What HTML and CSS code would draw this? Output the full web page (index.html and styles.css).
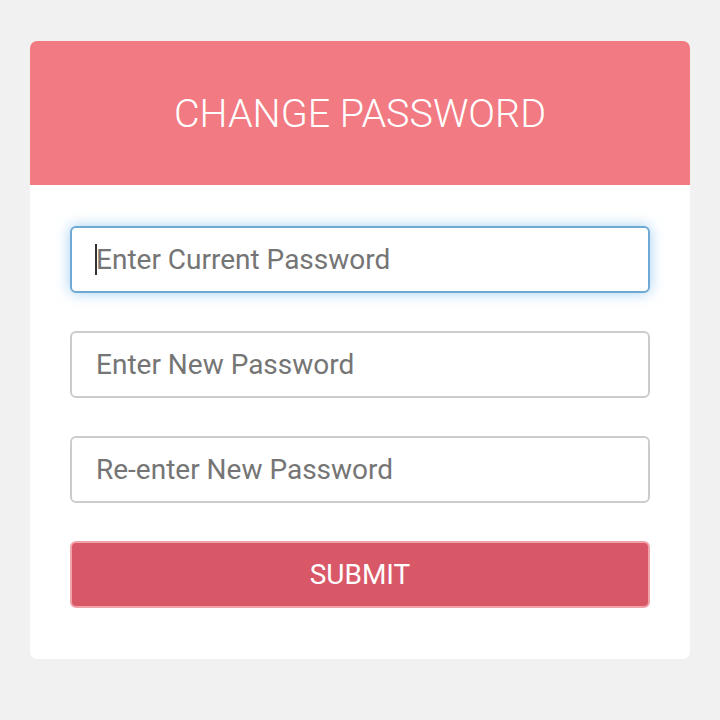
FILE: index.html
```html
<!DOCTYPE html>
<html lang="en">

<head>
    <meta charset="UTF-8">
    <meta name="viewport" content="width=device-width, initial-scale=1.0">
    <title>Change Password</title>
    <link rel="stylesheet" href="styles.css">
</head>

<body>
    <div class="card">
        <div class="card-header">
            <h1>CHANGE PASSWORD</h1>
        </div>
        <form class="card-body" onsubmit="return false;">
            <div class="field focused">
                <input type="password" class="input" placeholder="Enter Current Password">
                <span class="caret"></span>
            </div>
            <div class="field">
                <input type="password" class="input" placeholder="Enter New Password">
            </div>
            <div class="field">
                <input type="password" class="input" placeholder="Re-enter New Password">
            </div>
            <button type="submit" class="button">SUBMIT</button>
        </form>
    </div>
</body>

</html>
```

FILE: styles.css
```css
body {
    font-family: 'Roboto', 'Liberation Sans', sans-serif;
    background: #f1f1f1;
    margin: 0;
    padding: 41px 30px 0;
}

.card {
    background: #ffffff;
    border-radius: 7px;
    overflow: hidden;
    width: 660px;
}

.card-header {
    background: #f27a82;
    height: 144px;
    display: flex;
    align-items: center;
    justify-content: center;
}

.card-header h1 {
    margin: 0;
    color: #ffffff;
    font-weight: 300;
    font-size: 39.5px;
}

.card-body {
    padding: 41px 40px 51px;
    display: flex;
    flex-direction: column;
    gap: 38px;
}

.field {
    position: relative;
}

.input {
    box-sizing: border-box;
    width: 100%;
    height: 67px;
    padding: 0 24px;
    border: 2px solid #cccccc;
    border-radius: 6px;
    font-family: inherit;
    font-size: 28px;
    color: #333333;
    background: #ffffff;
    outline: none;
}

.input::placeholder {
    color: #757575;
}

.focused .input {
    border-color: #6fa8d2;
    box-shadow: 0 0 14px rgba(102, 175, 233, 0.6);
}

.caret {
    position: absolute;
    left: 25px;
    top: 18px;
    width: 2px;
    height: 31px;
    background: #333333;
}

.button {
    height: 67px;
    background: #d95868;
    color: #ffffff;
    border: 2px solid #f0a4aa;
    border-radius: 6px;
    font-family: inherit;
    font-size: 28px;
    cursor: pointer;
}
```
